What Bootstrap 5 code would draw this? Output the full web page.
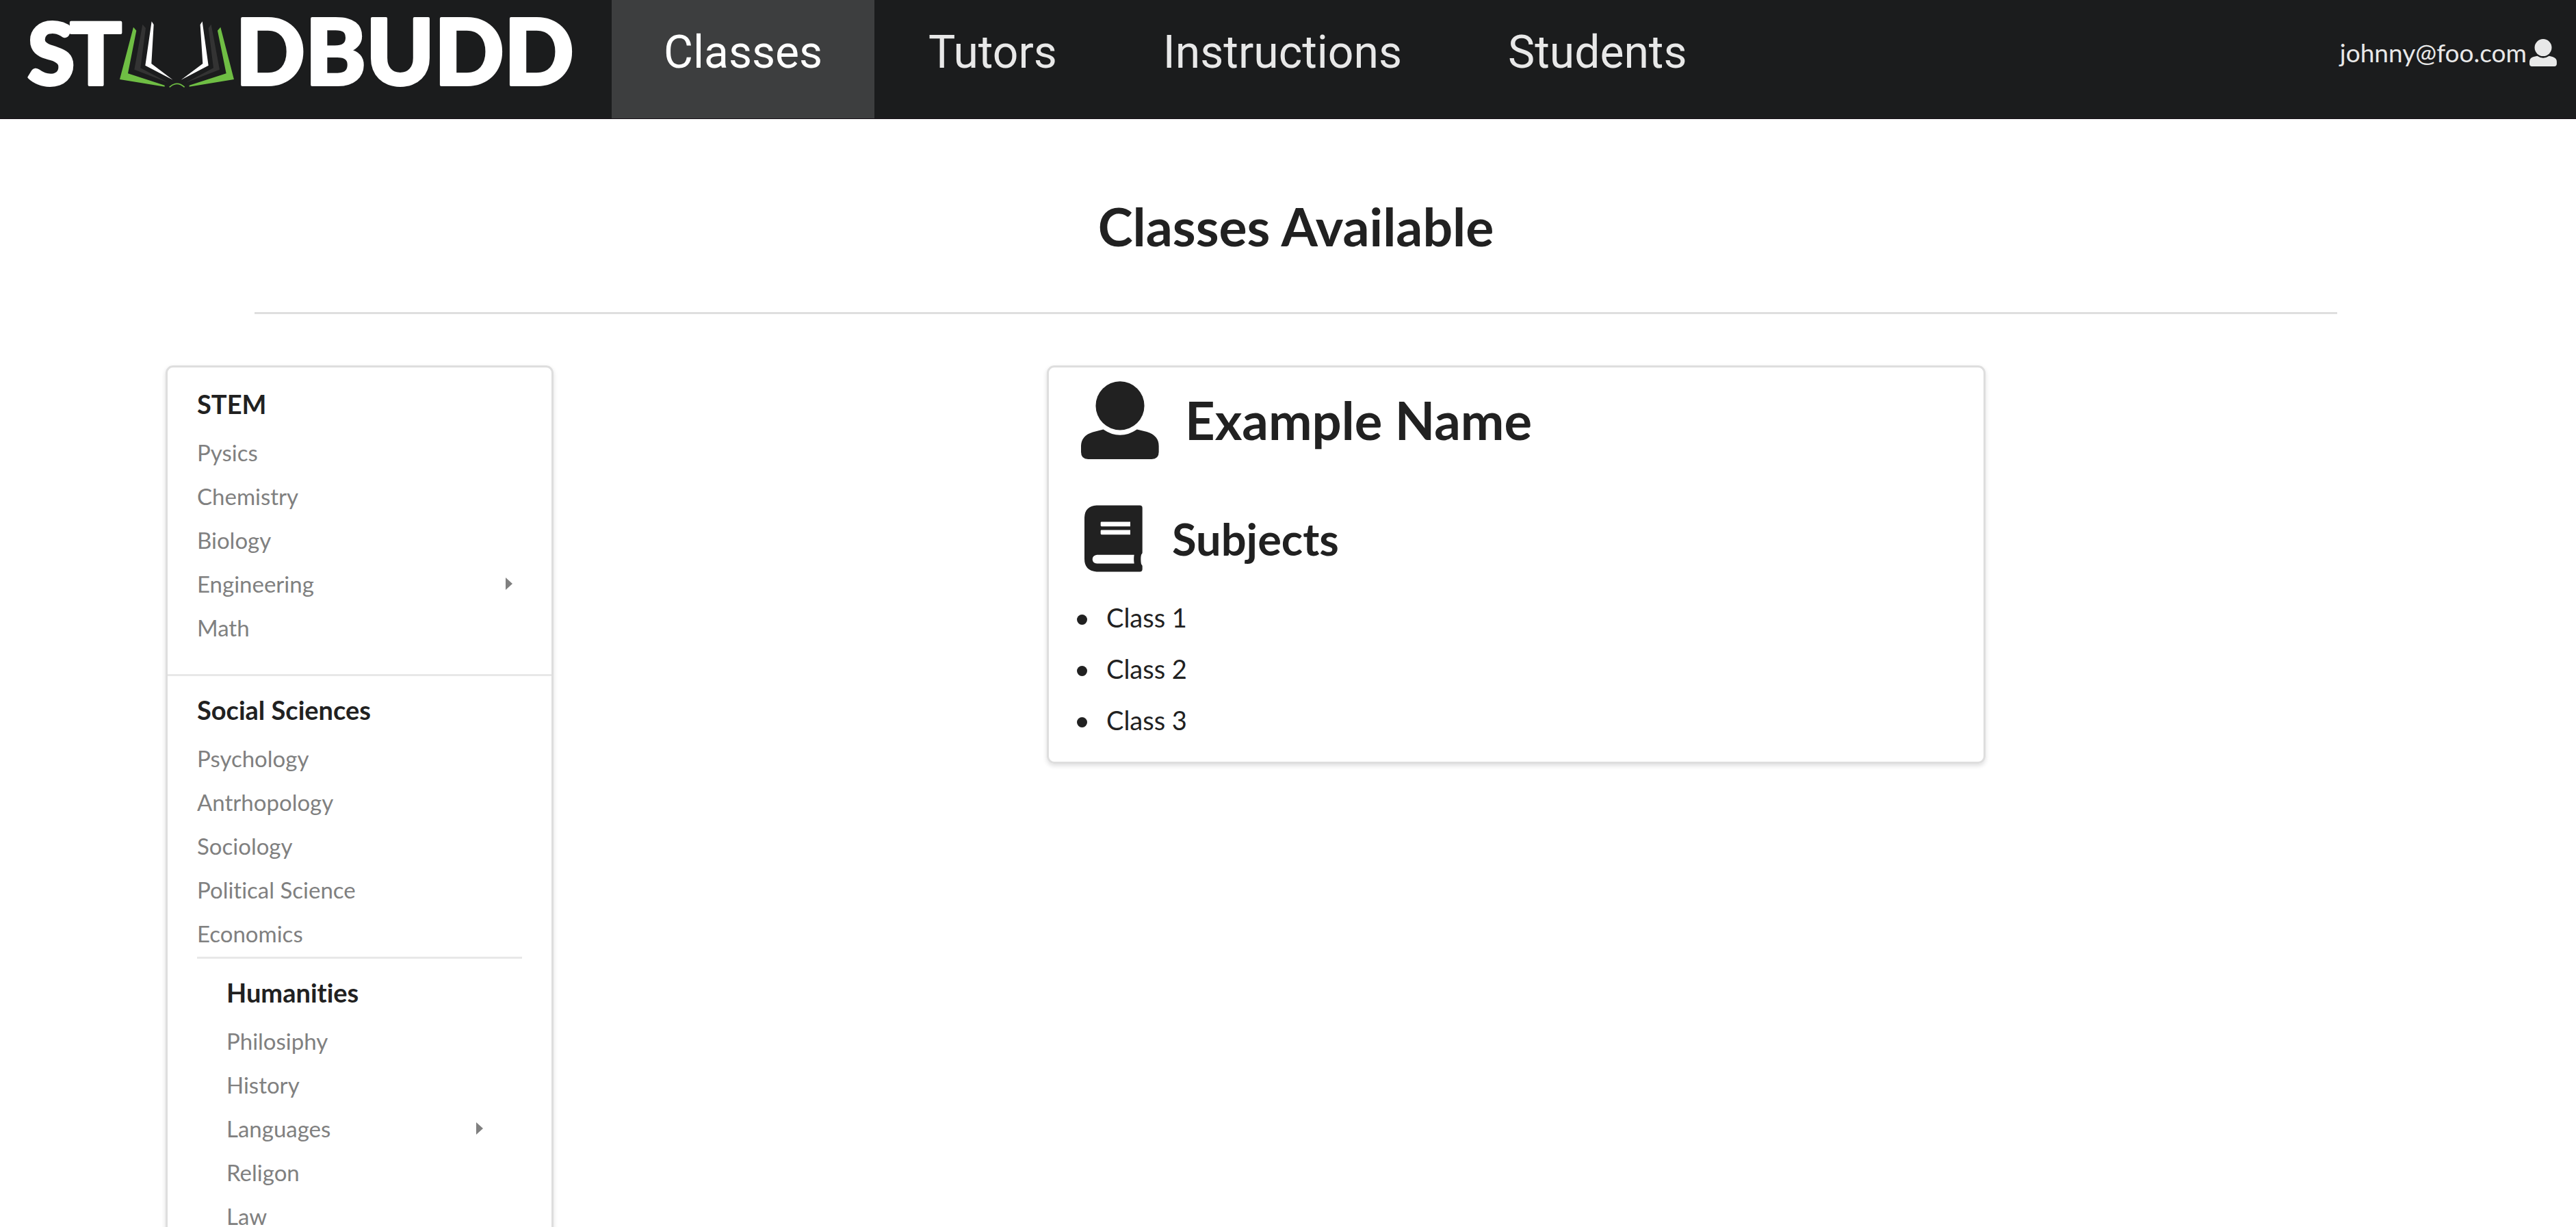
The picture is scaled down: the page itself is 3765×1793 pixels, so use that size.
<!DOCTYPE html>
<html lang="en">
<head>
<meta charset="utf-8">
<meta name="viewport" content="width=device-width, initial-scale=1">
<title>StudBudd - Classes</title>
<link rel="stylesheet" href="https://cdn.jsdelivr.net/npm/bootstrap@5.3.0/dist/css/bootstrap.min.css">
<style>
  body { font-family: Lato, sans-serif; font-size: 38px; line-height: 75px; color: #212121; background: #fff; font-variant-ligatures: none; }
  a { text-decoration: none; }
  .topbar { background: #1b1c1d; border-bottom: 1px solid #150f16; color: #e8e8e8; }
  .brand-logo { width: 894px; height: 173px; overflow: visible; }
  .main-menu { gap: 3px; }
  .main-link { font-family: Roboto, sans-serif; font-size: 66px; line-height: 153px; padding: 0 76px 20px; color: #e8e8e8; }
  .main-link:hover, .main-link.active { color: #fff; }
  .main-link.active { background: #3d3e3f; }
  .account { gap: 4px; padding: 0 28px 20px 0; font-size: 37px; color: #e8e8e8; }
  .account svg { width: 40px; height: 40px; }
  .page-head { margin: 108px 349px 75px 372px; border-bottom: 3px solid #dfdfdf; padding-bottom: 78px; }
  .page-head h1 { font-size: 77px; line-height: 96px; font-weight: 700; }
  .board { display: grid; grid-template-columns: 242fr 567fr 721fr 1372fr 863fr; align-items: start; }
  .panel { border: 3px solid #dedede; border-radius: 11px; box-shadow: 0 3px 6px rgba(34, 36, 38, .15); min-width: 0; }
  .topics { grid-column: 2; padding-top: 4px; }
  .tutor { grid-column: 4; padding: 20px 47px 23px; }
  .topic-group { padding: 25px 43px 36px; }
  .topic-group + .topic-group { border-top: 3px solid #e8e8e8; }
  .topic-group .topic-group { border-top: 3px solid #e8e8e8; margin-top: 2px; }
  .topic-group h2 { font-size: 38px; line-height: 48px; font-weight: 700; margin-bottom: 15px; }
  .topic { font-size: 33px; line-height: 64px; color: #808080; }
  .topic:hover { color: #212121; }
  .topic svg { width: 10px; height: 18px; margin-right: 14px; }
  .tutor h2 { font-size: 76px; line-height: 92px; font-weight: 700; }
  .tutor h3 { font-size: 65px; line-height: 78px; font-weight: 700; }
  .tutor-name { gap: 38px; margin-bottom: 67px; }
  .tutor-name svg { width: 114px; height: 114px; }
  .tutor-subjects { gap: 43px; padding-left: 5px; margin-bottom: 29px; }
  .tutor-subjects svg { width: 85px; height: 98px; }
  .class-list { margin-left: -6px; }
  .class-list li { display: flex; align-items: center; gap: 28px; }
  .class-list li::before { content: ""; width: 15px; height: 15px; margin-top: 6px; border-radius: 50%; background: currentColor; }
</style>
<script src="https://cdn.jsdelivr.net/npm/bootstrap@5.3.0/dist/js/bootstrap.bundle.min.js"></script>
</head>
<body class="vh-100 overflow-hidden">

<svg class="d-none" aria-hidden="true">
  <symbol id="icon-user" viewBox="181 113 340 340">
    <circle cx="351" cy="220" r="106"/>
    <path d="M278 323Q351 373 425 323L468 334Q520 350 520 396V422Q520 453 489 453H212Q181 453 181 422V394Q183 350 232 335Z"/>
  </symbol>
  <symbol id="icon-book" viewBox="195 657 255 291">
    <path fill-rule="evenodd" d="M248 657H438Q449 657 449 668V864Q449 869 444 873Q440 892 444 915Q449 918 449 924V936Q449 948 438 948H248Q195 944 195 892V710Q197 660 248 657ZM270 729Q266 729 266 733V745Q266 749 270 749H396V729ZM270 765Q266 765 266 769V781Q266 785 270 785H396V765ZM250 874Q231 876 230 893Q231 910 250 912H413Q410 893 413 874Z"/>
  </symbol>
  <symbol id="icon-caret" viewBox="0 0 10 18"><path d="M0 0L10 9L0 18Z"/></symbol>
</svg>

<nav class="topbar d-flex align-items-stretch" aria-label="Main">
  <a href="#" aria-label="StudBudd home">
    <svg class="brand-logo d-block" viewBox="0 0 894 173">
      <g fill="#fff" stroke="#fff" stroke-width="4" stroke-linejoin="round" font-family="Lato, sans-serif" font-weight="900">
        <text x="40 102" y="124" font-size="126">ST</text>
        <text x="344" y="124" font-size="134">DBUDD</text>
      </g>
      <g transform="translate(30 10) scale(.3333)">
        <path fill="#6fbe44" d="M495 89L508 104L471 292L632 344V350L435 318ZM877 89L864 104L902 292L740 344V350L936 318Z"/>
        <path fill="#333" d="M535 77L549 93L526 268L648 332L499 275ZM836 77L824 93L846 268L725 332L873 275Z"/>
        <path fill="#fff" d="M575 64L584 78L574 249L668 320L547 257ZM797 64L788 78L799 249L704 320L824 257Z"/>
        <path fill="none" stroke="#6fbe44" stroke-width="5" d="M653 352Q686 322 719 352"/>
      </g>
    </svg>
  </a>
  <div class="main-menu d-flex">
    <a class="main-link active" href="#" aria-current="page">Classes</a>
    <a class="main-link" href="#">Tutors</a>
    <a class="main-link" href="#">Instructions</a>
    <a class="main-link" href="#">Students</a>
  </div>
  <a class="account d-flex align-items-center ms-auto" href="#">johnny@foo.com<svg fill="currentColor" aria-hidden="true"><use href="#icon-user"/></svg></a>
</nav>

<header class="page-head text-center">
  <h1 class="mb-0">Classes Available</h1>
</header>

<main class="board">
  <aside class="panel topics">
    <section class="topic-group">
      <h2>STEM</h2>
      <a class="topic d-block" href="#">Pysics</a>
      <a class="topic d-block" href="#">Chemistry</a>
      <a class="topic d-block" href="#">Biology</a>
      <a class="topic d-flex align-items-center justify-content-between" href="#">Engineering<svg fill="currentColor" aria-hidden="true"><use href="#icon-caret"/></svg></a>
      <a class="topic d-block" href="#">Math</a>
    </section>
    <section class="topic-group">
      <h2>Social Sciences</h2>
      <a class="topic d-block" href="#">Psychology</a>
      <a class="topic d-block" href="#">Antrhopology</a>
      <a class="topic d-block" href="#">Sociology</a>
      <a class="topic d-block" href="#">Political Science</a>
      <a class="topic d-block" href="#">Economics</a>
      <section class="topic-group">
        <h2>Humanities</h2>
        <a class="topic d-block" href="#">Philosiphy</a>
        <a class="topic d-block" href="#">History</a>
        <a class="topic d-flex align-items-center justify-content-between" href="#">Languages<svg fill="currentColor" aria-hidden="true"><use href="#icon-caret"/></svg></a>
        <a class="topic d-block" href="#">Religon</a>
        <a class="topic d-block" href="#">Law</a>
      </section>
    </section>
  </aside>

  <article class="panel tutor">
    <div class="tutor-name d-flex align-items-center">
      <svg fill="currentColor" aria-hidden="true"><use href="#icon-user"/></svg>
      <h2 class="mb-0">Example Name</h2>
    </div>
    <div class="tutor-subjects d-flex align-items-center">
      <svg fill="currentColor" aria-hidden="true"><use href="#icon-book"/></svg>
      <h3 class="mb-0">Subjects</h3>
    </div>
    <ul class="class-list list-unstyled mb-0">
      <li>Class 1</li>
      <li>Class 2</li>
      <li>Class 3</li>
    </ul>
  </article>
</main>
</body>
</html>
